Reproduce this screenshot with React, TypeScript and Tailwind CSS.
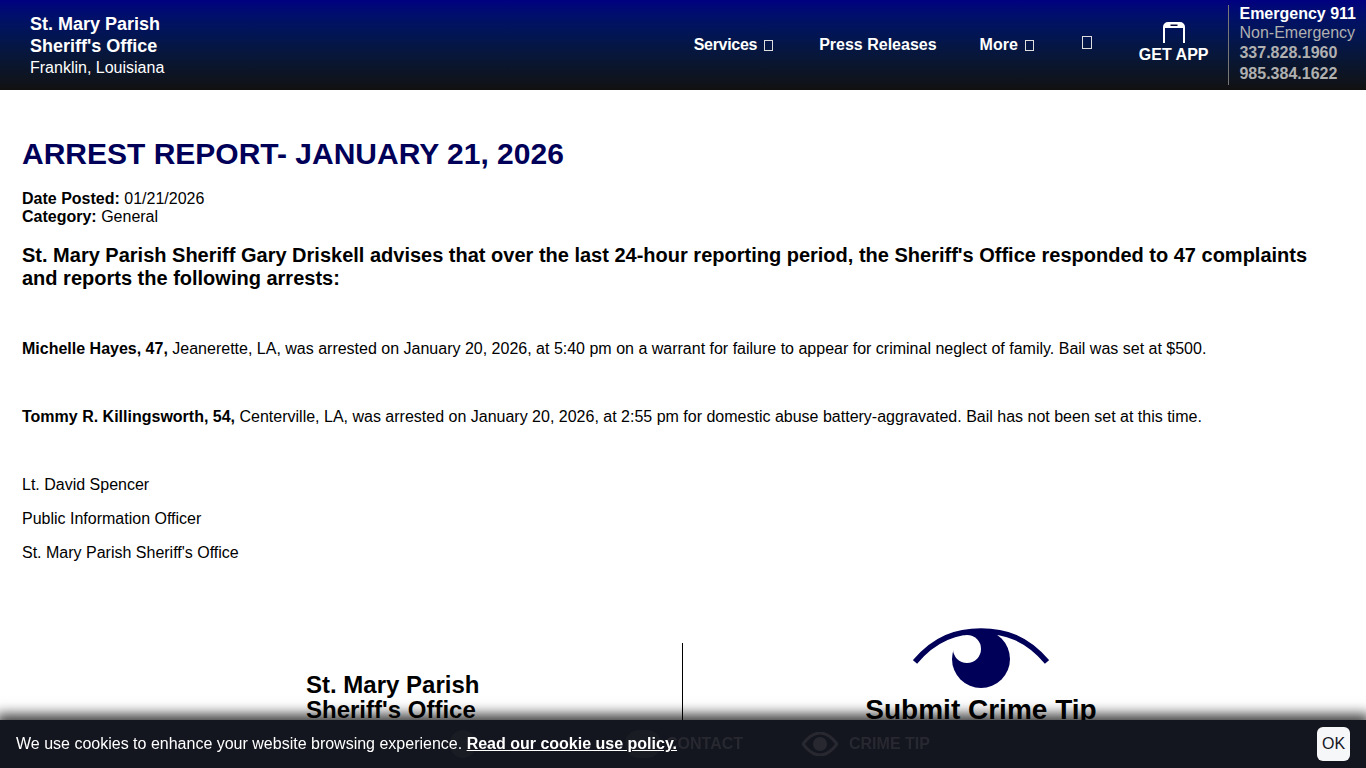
const NAVY = "text-[#000058]";

function PhoneIcon() {
  return (
    <svg width="24" height="22" viewBox="0 0 24 22" className="block">
      <path d="M2 21V5a4 4 0 0 1 4-4h12a4 4 0 0 1 4 4v16" fill="none" stroke="#fff" strokeWidth="2" />
      <path d="M2 6V5a4 4 0 0 1 4-4h12a4 4 0 0 1 4 4v1z" fill="#fff" />
      <rect x="8.5" y="2.5" width="7" height="1.5" fill="#0a0a3a" />
    </svg>
  );
}

function EyeLogo() {
  return (
    <svg width="136" height="62" viewBox="0 0 136 62" className="block">
      <circle cx="68" cy="31" r="29" fill="#000058" />
      <circle cx="54" cy="21" r="14" fill="#fff" />
      <path d="M2 34C22 10 44 3 68 3s46 7 66 31" fill="none" stroke="#000058" strokeWidth="5.5" />
    </svg>
  );
}

function Tofu({ large }: { large?: boolean }) {
  return <span className={`inline-block border border-[#ddd] ${large ? "w-[10px] h-[13px]" : "w-[9px] h-[11px]"}`} />;
}

function Header() {
  return (
    <header className="h-[90px] shrink-0 flex items-center justify-between pl-[30px] bg-gradient-to-b from-[#000080] to-[#111111] text-white">
      <div className="mt-[2px]">
        <div className="text-[18px] leading-[22px] font-bold">St. Mary Parish</div>
        <div className="text-[18px] leading-[22px] font-bold">Sheriff's Office</div>
        <div className="text-[16px] leading-[22px]">Franklin, Louisiana</div>
      </div>
      <div className="flex items-center h-full">
        <nav className="flex items-center text-[16px] font-bold">
          <a className="flex items-center gap-[7px] mr-[46px] tracking-[-0.3px]">Services <Tofu /></a>
          <a className="mr-[43px]">Press Releases</a>
          <a className="flex items-center gap-[7px] mr-[48px]">More <Tofu /></a>
          <a className="mr-[47px] -mt-[2px]"><Tofu large /></a>
        </nav>
        <a className="flex flex-col items-center mr-[20px] text-[16px] leading-[20px] font-bold -mt-[3px]">
          <PhoneIcon />
          <span className="mt-[1px]">GET APP</span>
        </a>
        <div className="h-[80px] border-l border-[#777] pl-[10px] pr-[10px] text-[16px] leading-[20px] font-bold whitespace-nowrap">
          <div className="-mt-[1px] -mb-[1px]">Emergency 911</div>
          <div className="font-normal text-[#b0b0b0]">Non-Emergency</div>
          <div className="text-[#b0b0b0]">337.828.1960</div>
          <div className="mt-[1px] text-[#b0b0b0]">985.384.1622</div>
        </div>
      </div>
    </header>
  );
}

function Article() {
  return (
    <main className="px-[22px] text-black">
      <h1 className={`mt-[46px] text-[30px] leading-[36px] font-bold ${NAVY}`}>ARREST REPORT- JANUARY 21, 2026</h1>
      <div className="mt-[18px] text-[16px] leading-[18px]">
        <div><b>Date Posted:</b> 01/21/2026</div>
        <div><b>Category:</b> General</div>
      </div>
      <p className="mt-[18px] text-[20px] leading-[23px] font-bold">
        St. Mary Parish Sheriff Gary Driskell advises that over the last 24-hour reporting period, the Sheriff's Office responded to 47 complaints and reports the following arrests:
      </p>
      <div className="text-[16px] leading-[18px]">
        <p className="mt-[50px]"><b>Michelle Hayes, 47,</b> Jeanerette, LA, was arrested on January 20, 2026, at 5:40 pm on a warrant for failure to appear for criminal neglect of family. Bail was set at $500.</p>
        <p className="mt-[50px]"><b>Tommy R. Killingsworth, 54,</b> Centerville, LA, was arrested on January 20, 2026, at 2:55 pm for domestic abuse battery-aggravated. Bail has not been set at this time.</p>
        <p className="mt-[50px]">Lt. David Spencer</p>
        <p className="mt-[16px]">Public Information Officer</p>
        <p className="mt-[16px]">St. Mary Parish Sheriff's Office</p>
      </div>
    </main>
  );
}

function Footer() {
  return (
    <section className="mt-[66px] flex text-black">
      <div className="w-[683px] shrink-0 h-[200px] mt-[15px] border-r border-black pl-[306px] pt-[29px] text-[24px] leading-[25px] font-bold">
        <div>St. Mary Parish</div>
        <div>Sheriff's Office</div>
      </div>
      <div className="flex-1 flex flex-col items-center pr-[87px]">
        <EyeLogo />
        <div className="mt-[4px] text-[28px] leading-[32px] font-bold">Submit Crime Tip</div>
      </div>
    </section>
  );
}

function CookieBar() {
  return (
    <div className="fixed left-0 right-0 bottom-0 h-[48px] bg-[#14161f] shadow-[0_-2px_12px_4px_rgba(0,0,0,0.75)] flex items-center justify-between pl-[16px] pr-[16px] text-white text-[16px]">
      {/* bottom nav showing faintly through the cookie bar */}
      <div className="absolute left-[450px] top-[10px] w-[26px] h-[28px] rounded-full bg-[#1a1c24]" />
      <div className="absolute left-[625px] top-[10px] w-[36px] h-[28px] rounded-full bg-[#1a1c24]" />
      <div className="absolute left-[666px] top-0 h-full flex items-center text-[16px] font-bold text-[#272830]">CONTACT</div>
      <div className="absolute left-[802px] top-0 h-full flex items-center gap-[11px] text-[16px] font-bold text-[#272830]">
        <svg width="36" height="24" viewBox="0 0 36 24">
          <path d="M1 12C7 4 12 1 18 1s11 3 17 11c-6 8-11 11-17 11S7 20 1 12z" fill="none" stroke="#272830" strokeWidth="3" />
          <circle cx="18" cy="12" r="7" fill="#272830" />
        </svg>
        CRIME TIP
      </div>
      <div className="relative">
        We use cookies to enhance your website browsing experience. <a className="font-bold underline">Read our cookie use policy.</a>
      </div>
      <button className="relative w-[33px] h-[34px] rounded-[6px] bg-[#f6f7f9] text-[#14161f] text-[16px]">OK</button>
    </div>
  );
}

export default function App() {
  return (
    <div className="h-screen overflow-hidden flex flex-col bg-white font-['Liberation_Sans',Arial,sans-serif]">
      <Header />
      <Article />
      <Footer />
      <CookieBar />
    </div>
  );
}
